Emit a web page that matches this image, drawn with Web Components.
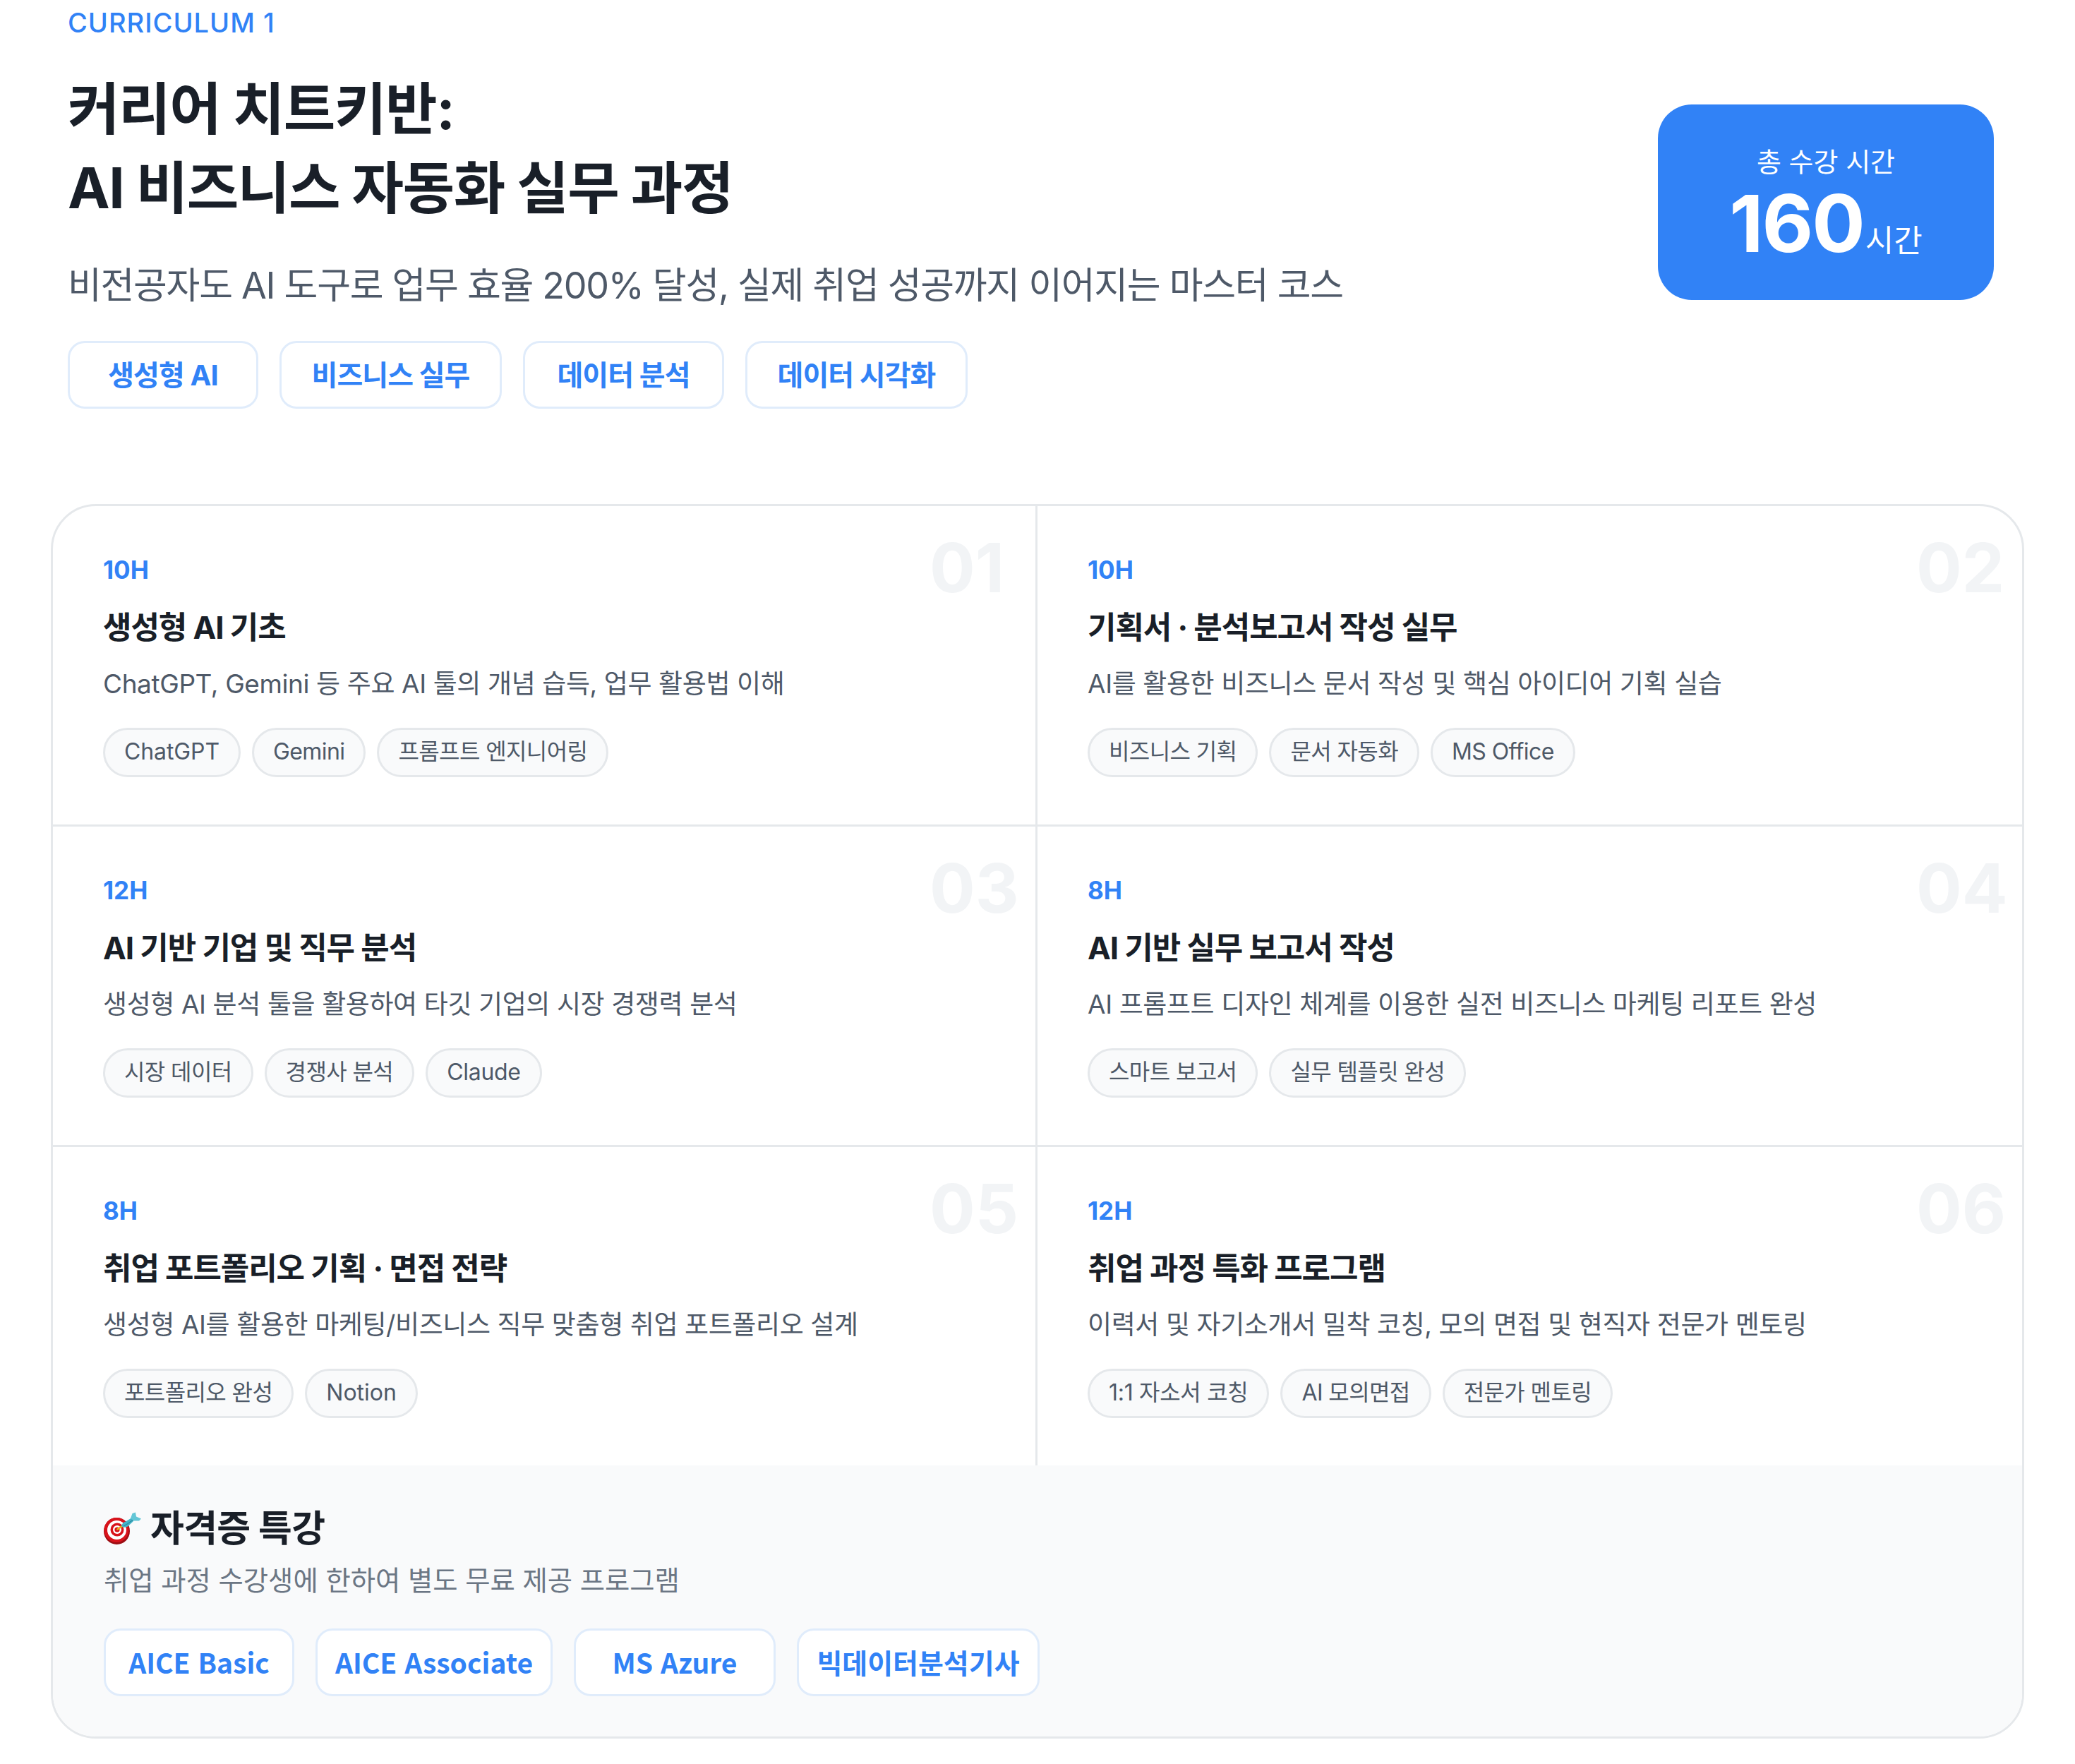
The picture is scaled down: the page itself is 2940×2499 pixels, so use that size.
<!DOCTYPE html>
<html lang="ko">
<head>
<meta charset="utf-8">
<title>Curriculum</title>
<style>
  html, body { margin: 0; background: #fff; }
  body {
    font-family: Inter, "Noto Sans CJK KR", sans-serif;
    color: #191f28;
  }
</style>
</head>
<body>
<curriculum-page>
  <course-header slot="header">
    <span slot="eyebrow">CURRICULUM 1</span>
    <span slot="title">커리어 치트키반:<br>AI 비즈니스 자동화 실무 과정</span>
    <span slot="lead">비전공자도 AI 도구로 업무 효율 200% 달성, 실제 취업 성공까지 이어지는 마스터 코스</span>
    <topic-tag slot="tags" style="width:270px">생성형 AI</topic-tag>
    <topic-tag slot="tags" style="width:315px">비즈니스 실무</topic-tag>
    <topic-tag slot="tags" style="width:285px">데이터 분석</topic-tag>
    <topic-tag slot="tags" style="width:315px">데이터 시각화</topic-tag>
    <hours-badge slot="badge" hours="160"></hours-badge>
  </course-header>

  <course-board>
    <course-cell hours="10H" num="01" heading="생성형 AI 기초" text="ChatGPT, Gemini 등 주요 AI 툴의 개념 습득, 업무 활용법 이해">
      <tool-chip style="letter-spacing:-.1px">ChatGPT</tool-chip><tool-chip>Gemini</tool-chip><tool-chip>프롬프트 엔지니어링</tool-chip>
    </course-cell>
    <course-cell hours="10H" num="02" heading="기획서 · 분석보고서 작성 실무" text="AI를 활용한 비즈니스 문서 작성 및 핵심 아이디어 기획 실습" class="even">
      <tool-chip>비즈니스 기획</tool-chip><tool-chip>문서 자동화</tool-chip><tool-chip>MS Office</tool-chip>
    </course-cell>
    <course-cell hours="12H" num="03" heading="AI 기반 기업 및 직무 분석" text="생성형 AI 분석 툴을 활용하여 타깃 기업의 시장 경쟁력 분석">
      <tool-chip>시장 데이터</tool-chip><tool-chip>경쟁사 분석</tool-chip><tool-chip style="letter-spacing:-.3px">Claude</tool-chip>
    </course-cell>
    <course-cell hours="8H" num="04" heading="AI 기반 실무 보고서 작성" text="AI 프롬프트 디자인 체계를 이용한 실전 비즈니스 마케팅 리포트 완성" class="even">
      <tool-chip>스마트 보고서</tool-chip><tool-chip>실무 템플릿 완성</tool-chip>
    </course-cell>
    <course-cell hours="8H" num="05" heading="취업 포트폴리오 기획 · 면접 전략" text="생성형 AI를 활용한 마케팅/비즈니스 직무 맞춤형 취업 포트폴리오 설계" class="last">
      <tool-chip>포트폴리오 완성</tool-chip><tool-chip style="letter-spacing:0">Notion</tool-chip>
    </course-cell>
    <course-cell hours="12H" num="06" heading="취업 과정 특화 프로그램" text="이력서 및 자기소개서 밀착 코칭, 모의 면접 및 현직자 전문가 멘토링" class="even last">
      <tool-chip style="letter-spacing:-.3px">1:1 자소서 코칭</tool-chip><tool-chip>AI 모의면접</tool-chip><tool-chip>전문가 멘토링</tool-chip>
    </course-cell>
    <cert-panel slot="footer" heading="자격증 특강" text="취업 과정 수강생에 한하여 별도 무료 제공 프로그램">
      <cert-tag style="width:270px">AICE Basic</cert-tag><cert-tag style="width:336px">AICE Associate</cert-tag><cert-tag style="width:286px">MS Azure</cert-tag><cert-tag style="width:344px">빅데이터분석기사</cert-tag>
    </cert-panel>
  </course-board>
</curriculum-page>

<script>
function define(name, css, html, init) {
  const template = document.createElement('template');
  template.innerHTML = `<style>${css}</style>${html}`;
  customElements.define(name, class extends HTMLElement {
    constructor() {
      super();
      const root = this.attachShadow({ mode: 'open' });
      root.appendChild(template.content.cloneNode(true));
    }
    connectedCallback() {
      if (init) init(this, this.shadowRoot);
    }
  });
}

define('curriculum-page', `
  :host { display: block; width: 2940px; height: 2499px; box-sizing: border-box; padding: 0 72px; overflow: hidden; }
`, `<slot name="header"></slot><slot></slot>`);

define('course-header', `
  :host { display: flex; justify-content: space-between; align-items: flex-start; box-sizing: border-box; height: 714px; padding: 10px 43px 0 24px; }
  .eyebrow { font-size: 38px; line-height: 44px; font-weight: 500; color: #3182f6; letter-spacing: 1px; }
  .title { margin-top: 44px; font-size: 80px; line-height: 112px; font-weight: 700; letter-spacing: -1.5px; color: #191f28; }
  .lead { margin-top: 47px; font-size: 52px; line-height: 72px; font-weight: 400; color: #4e5968; letter-spacing: -1.3px; white-space: nowrap; }
  .tags { display: flex; gap: 30px; margin-top: 42px; }
  ::slotted(hours-badge) { margin-top: 138px; }
`, `
  <div>
    <div class="eyebrow"><slot name="eyebrow"></slot></div>
    <div class="title"><slot name="title"></slot></div>
    <div class="lead"><slot name="lead"></slot></div>
    <div class="tags"><slot name="tags"></slot></div>
  </div>
  <slot name="badge"></slot>
`);

define('topic-tag', `
  :host { display: block; box-sizing: border-box; height: 96px; border: 3px solid #e0ecfb; border-radius: 24px; background: #fff; text-align: center;
    font-size: 40px; line-height: 92px; font-weight: 700; color: #3182f6; letter-spacing: -.9px; white-space: nowrap; }
`, `<slot></slot>`);

define('hours-badge', `
  :host { display: flex; flex-direction: column; align-items: center; box-sizing: border-box; width: 476px; height: 277px; padding-top: 53px; border-radius: 48px; background: #3182f6; color: #fff; }
  .label { font-size: 38px; line-height: 56px; }
  .value { display: flex; align-items: baseline; margin-top: 4px; line-height: 110px; }
  .num { font-size: 112px; font-weight: 700; letter-spacing: -2px; }
  .unit { font-size: 44px; margin-left: 2px; }
`, `<div class="label">총 수강 시간</div><div class="value"><span class="num"></span><span class="unit">시간</span></div>`,
  (el, root) => { root.querySelector('.num').textContent = el.getAttribute('hours'); });

define('course-board', `
  :host { display: block; box-sizing: border-box; height: 1749px; border: 3px solid #e5e8eb; border-radius: 64px; overflow: hidden; background: #fff; }
  .grid { display: grid; grid-template-columns: 1395px 1395px; grid-template-rows: 454px 454px 451px; }
`, `<div class="grid"><slot></slot></div><slot name="footer"></slot>`);

define('course-cell', `
  :host { display: block; position: relative; box-sizing: border-box; padding: 67px 24px 0 71px; border-right: 3px solid #e5e8eb; border-bottom: 3px solid #e5e8eb; overflow: hidden; }
  :host(.even) { border-right: 0; padding-left: 71px; }
  :host(.last) { border-bottom: 0; }
  .num { position: absolute; top: 29px; right: 24px; width: 126px; text-align: left; white-space: nowrap; font-size: 96px; line-height: 116px; font-weight: 700; color: #f2f4f6; }
  .hours { font-size: 35px; line-height: 46px; font-weight: 700; color: #3182f6; }
  h3 { margin: 29px 0 0; font-size: 44px; line-height: 60px; font-weight: 700; letter-spacing: -1.1px; color: #191f28; }
  p { margin: 21px 0 0; font-size: 37px; line-height: 58px; font-weight: 400; letter-spacing: -.4px; color: #4e5968; }
  .chips { display: flex; gap: 16px; margin-top: 33px; }
`, `
  <div class="num"></div>
  <div class="hours"></div>
  <h3></h3>
  <p></p>
  <div class="chips"><slot></slot></div>
`, (el, root) => {
  root.querySelector('.num').textContent = el.getAttribute('num');
  root.querySelector('.hours').textContent = el.getAttribute('hours');
  root.querySelector('h3').textContent = el.getAttribute('heading');
  root.querySelector('p').textContent = el.getAttribute('text');
});

define('tool-chip', `
  :host { display: block; box-sizing: border-box; height: 70px; padding: 0 27px; border: 3px solid #e5e8eb; border-radius: 35px; background: #f9fafb;
    font-size: 32px; line-height: 62px; color: #4e5968; white-space: nowrap; letter-spacing: -.6px; }
`, `<slot></slot>`);

define('cert-panel', `
  :host { display: block; box-sizing: border-box; height: 384px; padding: 57px 72px 0; background: #f9fafb; }
  .head { display: flex; align-items: center; gap: 11px; height: 66px; }
  svg { display: block; flex: none; margin-left: -1px; }
  h3 { margin: 0; font-size: 52px; line-height: 66px; font-weight: 700; letter-spacing: -.7px; color: #191f28; }
  p { margin: 12px 0 0; font-size: 38.4px; line-height: 56px; letter-spacing: -.05px; color: #6b7684; }
  .tags { display: flex; gap: 30px; margin-top: 40px; }
`, `
  <div class="head">
    <svg width="56" height="48" viewBox="0 0 56 48">
      <ellipse cx="19.5" cy="27" rx="18.5" ry="19" fill="#9c0d13"/>
      <circle cx="19" cy="25.5" r="17.5" fill="#d8131b"/>
      <circle cx="19.5" cy="25.5" r="13.5" fill="#fff"/>
      <circle cx="20" cy="25" r="9.5" fill="#d8131b"/>
      <circle cx="20" cy="25" r="6" fill="#fff"/>
      <circle cx="20" cy="25" r="3.6" fill="#d8131b"/>
      <path d="M20.5 24.5 27 20" stroke="#e8b21a" stroke-width="2.6" stroke-linecap="round"/>
      <path d="M26 20Q27 15 32 13.500L41 8 43.500 12.500 35 20.500Q30 23 26 20Z" fill="#45b4c9"/>
      <path d="M39 9 41.500 2 46 0.500 47 6.500 54 9.500 51 12.500 44 12.500Z" fill="#63c6d6"/>
      <path d="M29 20 35 16.500 42 11.500" stroke="#2c8ba1" stroke-width="1.300" fill="none"/>
    </svg>
    <h3></h3>
  </div>
  <p></p>
  <div class="tags"><slot></slot></div>
`, (el, root) => {
  root.querySelector('h3').textContent = el.getAttribute('heading');
  root.querySelector('p').textContent = el.getAttribute('text');
});

define('cert-tag', `
  :host { display: block; box-sizing: border-box; height: 96px; border: 3px solid #e0ecfb; border-radius: 24px; background: #fff; text-align: center;
    font-family: "Noto Sans CJK KR", sans-serif; font-size: 39px; line-height: 88px; font-weight: 700; color: #3182f6; white-space: nowrap; }
`, `<slot></slot>`);
</script>
</body>
</html>
